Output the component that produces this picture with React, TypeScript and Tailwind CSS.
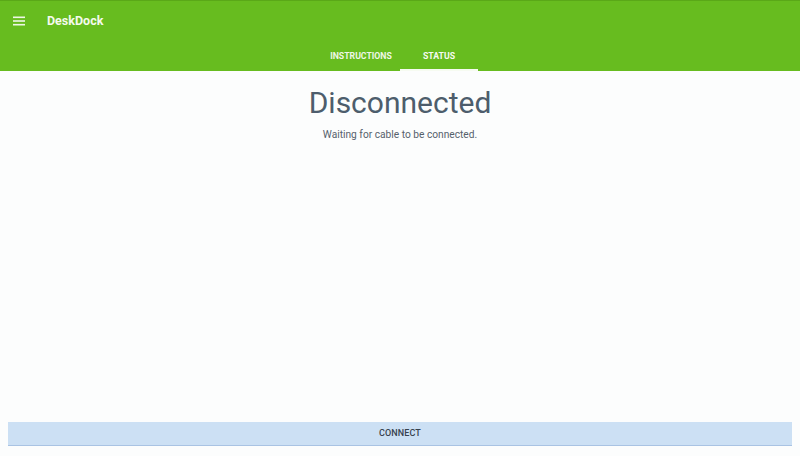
export default function App() {
  return (
    <div
      className="w-[800px] h-[456px] flex flex-col bg-[#fcfdfd] overflow-hidden"
      style={{ fontFamily: 'Roboto, "Liberation Sans", sans-serif' }}
    >
      <div className="h-[71px] bg-[#67bc1f] border-t border-[#5aa818] flex flex-col shrink-0">
        <div className="h-[40px] flex items-center">
          <div className="w-[47px] flex justify-center items-center pr-[10px]">
            <svg width="12" height="10" viewBox="0 0 12 10">
              <rect x="0" y="0.5" width="12" height="1.6" fill="#eef7e6" />
              <rect x="0" y="4.2" width="12" height="1.6" fill="#eef7e6" />
              <rect x="0" y="7.9" width="12" height="1.6" fill="#eef7e6" />
            </svg>
          </div>
          <span className="text-[12.5px] font-bold text-[#f4faee]">DeskDock</span>
        </div>
        <div className="flex-1 flex justify-center">
          <div className="w-[78px] pt-[3px] flex items-center justify-center text-[8.7px] font-bold text-[#eef7e6] border-b-[2px] border-transparent">
            INSTRUCTIONS
          </div>
          <div className="w-[78px] pt-[3px] flex items-center justify-center text-[8.7px] font-bold text-[#f6fbf1] border-b-[2px] border-[#f6fbf1]">
            STATUS
          </div>
        </div>
      </div>
      <div className="flex-1 flex flex-col items-center pt-[13px]">
        <div className="text-[30px] leading-[38px] text-[#4d5d6c]">Disconnected</div>
        <div className="text-[10.2px] leading-[14px] text-[#56616c] mt-[6px]">Waiting for cable to be connected.</div>
      </div>
      <div className="px-[8px] pb-[10px] shrink-0">
        <div className="h-[24px] bg-[#cce0f4] border-b border-[#a9c3e3] flex items-center justify-center text-[9px] font-medium text-[#37424e] tracking-[0.1px]">
          CONNECT
        </div>
      </div>
    </div>
  );
}
